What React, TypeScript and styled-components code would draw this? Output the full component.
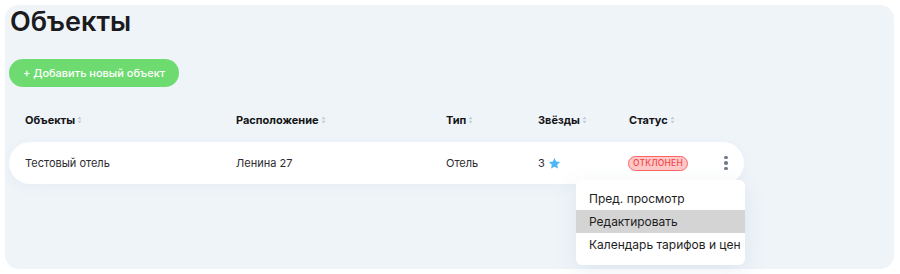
import React from "react";
import styled, { createGlobalStyle } from "styled-components";

const Global = createGlobalStyle`
  html, body { margin: 0; padding: 0; background: #ffffff; }
  body { font-family: Inter, "Noto Sans", sans-serif; color: #1d1d1f; }
  * { box-sizing: border-box; }
`;

const Panel = styled.div`
  margin: 5px;
  width: 889px;
  height: 264px;
  background: #eff4f9;
  border-radius: 14px;
  padding: 0 4px;
`;

const Title = styled.h1`
  margin: 0;
  font-size: 27px;
  line-height: 34px;
  font-weight: 600;
  color: #1b1b1d;
  padding-left: 1px;
`;

const AddButton = styled.button`
  margin-top: 20px;
  height: 28px;
  width: 170px;
  border: none;
  border-radius: 14px;
  background: #6ddb6f;
  color: #ffffff;
  font-family: Inter, "Noto Sans", sans-serif;
  font-size: 11px;
  font-weight: 500;
  padding: 0;
  cursor: pointer;
`;

const Grid = styled.div`
  display: grid;
  grid-template-columns: 211px 210px 92px 91px 1fr 30px;
  align-items: center;
  padding: 0 3px 0 16px;
  width: 735px;
`;

const HeaderRow = styled(Grid)`
  margin-top: 15px;
  height: 36px;
`;

const HeaderCell = styled.div`
  display: flex;
  align-items: center;
  gap: 2px;
  font-size: 11px;
  font-weight: 700;
  color: #151517;
`;

const Row = styled(Grid)`
  position: relative;
  margin-top: 4px;
  height: 42px;
  background: #ffffff;
  border-radius: 21px;
  box-shadow: 0 3px 12px rgba(60, 90, 130, 0.05);
`;

const Cell = styled.div`
  display: flex;
  align-items: center;
  gap: 3px;
  font-size: 11px;
  color: #2c2c30;
`;

const Badge = styled.span`
  display: inline-flex;
  align-items: center;
  justify-content: center;
  width: 60px;
  height: 15px;
  border-radius: 8px;
  background: #ffc8c8;
  border: 1px solid #ff6464;
  color: #f04848;
  font-size: 8.5px;
  font-weight: 500;
  letter-spacing: 0.2px;
  margin-left: -1px;
`;

const Kebab = styled.div`
  display: flex;
  flex-direction: column;
  align-items: center;
  gap: 2px;
  span {
    width: 3.5px;
    height: 3.5px;
    border-radius: 50%;
    background: #6f7d8c;
  }
`;

const Menu = styled.div`
  position: absolute;
  left: 567px;
  top: 38px;
  width: 169px;
  padding: 7px 0 9px;
  background: #ffffff;
  border-radius: 6px;
  box-shadow: 0 6px 22px rgba(90, 120, 160, 0.12);
  z-index: 2;
`;

const MenuItem = styled.div<{ $active?: boolean }>`
  height: 23px;
  display: flex;
  align-items: center;
  padding-left: 13px;
  font-size: 12px;
  color: #1e1e22;
  background: ${(p) => (p.$active ? "#d4d4d4" : "transparent")};
`;

const SortIcon = () => (
  <svg width="5" height="8" viewBox="0 0 5 8">
    <path d="M2.5 0.5 L4.5 3.2 H0.5 Z" fill="#c4cbd2" />
    <path d="M2.5 7.5 L4.5 4.8 H0.5 Z" fill="#c4cbd2" />
  </svg>
);

const Star = () => (
  <svg width="13" height="13" viewBox="0 0 24 24">
    <path
      d="M12 1.8l3.1 6.6 7.2.9-5.3 5 1.4 7.1L12 17.9l-6.4 3.5 1.4-7.1-5.3-5 7.2-.9z"
      fill="#4db6f6"
    />
  </svg>
);

const headers = ["Объекты", "Расположение", "Тип", "Звёзды", "Статус"];

export default function App() {
  return (
    <>
      <Global />
      <Panel>
        <Title>Объекты</Title>
        <AddButton>+ Добавить новый объект</AddButton>
        <HeaderRow>
          {headers.map((h) => (
            <HeaderCell key={h}>
              {h}
              <SortIcon />
            </HeaderCell>
          ))}
          <div />
        </HeaderRow>
        <Row>
          <Cell>Тестовый отель</Cell>
          <Cell>Ленина 27</Cell>
          <Cell>Отель</Cell>
          <Cell>
            3 <Star />
          </Cell>
          <Cell>
            <Badge>ОТКЛОНЕН</Badge>
          </Cell>
          <Kebab>
            <span />
            <span />
            <span />
          </Kebab>
          <Menu>
            <MenuItem>Пред. просмотр</MenuItem>
            <MenuItem $active>Редактировать</MenuItem>
            <MenuItem>Календарь тарифов и цен</MenuItem>
          </Menu>
        </Row>
      </Panel>
    </>
  );
}
